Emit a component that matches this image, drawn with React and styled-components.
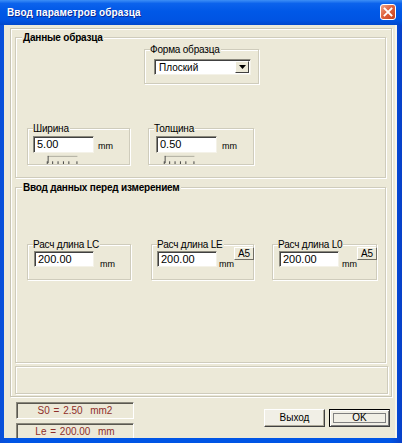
import React from 'react';
import styled, { createGlobalStyle } from 'styled-components';

const Global = createGlobalStyle`
  html, body { margin: 0; padding: 0; background: #fff; }
  body { font-family: "Liberation Sans", Arial, sans-serif; }
  * { box-sizing: border-box; }
`;

const Window = styled.div`
  width: 402px;
  height: 443px;
  display: flex;
  flex-direction: column;
  background: linear-gradient(to right, #0A4FD8, #0055E5 3%, #0055E5 97%, #0840C8);
  overflow: hidden;
`;

const TitleBar = styled.div`
  height: 25px;
  flex: none;
  display: flex;
  align-items: center;
  justify-content: space-between;
  padding: 0 6px 1px 7px;
  background: linear-gradient(to bottom, #3D8FF6 0%, #0C63EC 14%, #0058E7 45%, #0054E3 80%, #0047CC 100%);
`;

const Title = styled.span`
  color: #fff;
  font-weight: bold;
  font-size: 10px;
  text-shadow: 1px 1px 0 #0B2A94;
  letter-spacing: 0.1px;
`;

const CloseBtn = styled.div`
  width: 16px;
  height: 16px;
  border: 1px solid #fff;
  border-radius: 3px;
  background: linear-gradient(135deg, #F0A58A 0%, #E0643E 45%, #C8401C 100%);
  display: flex;
  align-items: center;
  justify-content: center;
`;

const Body = styled.div`
  flex: 1;
  margin: 0 5px 5px 4px;
  background: #ECE9D8;
  overflow: hidden;
  display: flex;
  flex-direction: column;
  padding: 3px 0 0 6px;
  border-right: 2px solid #F7F5EC;
`;

const Frame = styled.div`
  width: 382px;
  height: 369px;
  flex: none;
  border: 1px solid #C8C5B4;
  box-shadow: inset 1px 1px 0 #fff, 1px 1px 0 #fff;
  padding: 8px 0 0 4px;
  display: flex;
  flex-direction: column;
`;

const Group = styled.div`
  position: relative;
  width: 371px;
  height: ${p => p.$h}px;
  margin-top: ${p => p.$mt || 0}px;
  border: 1px solid #CFCCBC;
  box-shadow: inset 1px 1px 0 #fff, 1px 1px 0 #fff;
  display: flex;
  flex-direction: column;
  flex: none;
`;

const GroupLegend = styled.span`
  position: absolute;
  top: -7px;
  left: 6px;
  padding: 0 1px;
  background: #ECE9D8;
  font-size: 10px;
  font-weight: bold;
  color: #000;
  line-height: 13px;
  letter-spacing: -0.2px;
`;

const Row = styled.div`
  display: flex;
  gap: ${p => p.$gap || 0}px;
  margin-top: ${p => p.$mt || 0}px;
  margin-left: ${p => p.$ml || 0}px;
`;

const SubGroup = styled.div`
  position: relative;
  width: ${p => p.$w}px;
  height: ${p => p.$h}px;
  border: 1px solid #CFCCBC;
  box-shadow: inset 1px 1px 0 #fff, 1px 1px 0 #fff;
  padding: ${p => p.$pt}px 0 0 ${p => p.$pl}px;
  display: flex;
  flex-direction: column;
`;

const SubLegend = styled.span`
  position: absolute;
  top: -6px;
  left: 5px;
  padding: 0 1px 0 0;
  background: #ECE9D8;
  font-size: 10px;
  line-height: 11px;
  color: #000;
  letter-spacing: -0.2px;
`;

const FieldRow = styled.div`
  display: flex;
  align-items: flex-end;
`;

const Input = styled.div`
  width: ${p => p.$w}px;
  height: ${p => p.$h}px;
  flex: none;
  background: #fff;
  border-top: 1px solid #8A887C;
  border-left: 1px solid #8A887C;
  border-right: 1px solid #F4F2E8;
  border-bottom: 1px solid #F4F2E8;
  box-shadow: inset 1px 1px 0 #404040;
  padding: 1px 0 0 3px;
  font-size: 11px;
  line-height: 13px;
  color: #000;
`;

const Unit = styled.span`
  font-size: 9px;
  color: #000;
  margin-left: ${p => p.$ml}px;
  margin-bottom: ${p => p.$mb}px;
  line-height: 10px;
`;

const SmallBtn = styled.div`
  margin-left: auto;
  margin-right: -1px;
  align-self: flex-start;
  margin-top: -4px;
  width: 20px;
  height: 13px;
  background: #ECE9D8;
  border-top: 1px solid #fff;
  border-left: 1px solid #fff;
  border-right: 1px solid #716F64;
  border-bottom: 1px solid #716F64;
  font-size: 10px;
  line-height: 11px;
  text-align: center;
  color: #000;
`;

const Select = styled.div`
  width: 97px;
  height: 16px;
  background: #fff;
  border-top: 1px solid #8A887C;
  border-left: 1px solid #8A887C;
  border-right: 1px solid #F4F2E8;
  border-bottom: 1px solid #F4F2E8;
  box-shadow: inset 1px 1px 0 #404040;
  display: flex;
  align-items: center;
  justify-content: space-between;
  padding: 1px 1px 1px 4px;
  font-size: 10px;
  color: #000;
`;

const ArrowBtn = styled.div`
  width: 14px;
  height: 12px;
  background: #ECE9D8;
  border-top: 1px solid #fff;
  border-left: 1px solid #fff;
  border-right: 1px solid #404040;
  border-bottom: 1px solid #404040;
  display: flex;
  align-items: center;
  justify-content: center;
`;

const Track = styled.svg`
  margin: 2px 0 0 ${p => p.$ml}px;
  display: block;
`;

const Blank = styled.div`
  width: 373px;
  height: 28px;
  margin-top: 3px;
  border: 1px solid #CFCCBC;
  box-shadow: inset 1px 1px 0 #fff, 1px 1px 0 #fff;
  flex: none;
`;

const Bottom = styled.div`
  width: 382px;
  display: flex;
  justify-content: space-between;
  margin-top: 5px;
`;

const StatusCol = styled.div`
  margin-left: 6px;
  display: flex;
  flex-direction: column;
  gap: 4px;
`;

const Status = styled.div`
  width: 118px;
  height: 17px;
  border-top: 1px solid #8A887C;
  border-left: 1px solid #8A887C;
  border-right: 1px solid #fff;
  border-bottom: 1px solid #fff;
  box-shadow: inset 1px 1px 0 #5A5850;
  color: #8E2F2A;
  font-size: 10px;
  line-height: 15px;
  text-align: center;
  word-spacing: 1px;
`;

const Buttons = styled.div`
  display: flex;
  gap: 4px;
  margin-top: 7px;
  margin-right: 2px;
  align-self: flex-start;
`;

const Button = styled.div`
  width: 61px;
  height: 18px;
  background: #F1EFE6;
  border: 1px solid ${p => (p.$def ? '#000' : '#fff')};
  border-right-color: #404040;
  border-bottom-color: #404040;
  box-shadow: ${p =>
    p.$def
      ? 'inset 1px 1px 0 #fff, inset -1px -1px 0 #808080, inset 0 0 0 3px #F1EFE6, inset 0 0 0 4px #808080'
      : 'inset -1px -1px 0 #ACA899'};
  font-size: 10px;
  line-height: 16px;
  text-align: center;
  color: #000;
`;

function Trackbar({ ml }) {
  return (
    <Track $ml={ml} width="38" height="10" viewBox="0 0 38 10">
      <line x1="2" y1="1.5" x2="35" y2="1.5" stroke="#A8A698" strokeWidth="1" />
      <line x1="2.5" y1="1" x2="2.5" y2="9" stroke="#404040" strokeWidth="1" />
      {[1, 7, 13, 19, 25, 34].map(x => (
        <line key={x} x1={x + 0.5} y1="7" x2={x + 0.5} y2="10" stroke="#333" strokeWidth="1" />
      ))}
    </Track>
  );
}

export default function App() {
  return (
    <>
      <Global />
      <Window>
        <TitleBar>
          <Title>Ввод параметров образца</Title>
          <CloseBtn>
            <svg width="10" height="10" viewBox="0 0 10 10">
              <path d="M1.5 1.5 L8.5 8.5 M8.5 1.5 L1.5 8.5" stroke="#fff" strokeWidth="1.8" strokeLinecap="square" />
            </svg>
          </CloseBtn>
        </TitleBar>
        <Body>
          <Frame>
            <Group $h={141}>
              <GroupLegend>Данные образца</GroupLegend>
              <Row $mt={11} $ml={128}>
                <SubGroup $w={115} $h={35} $pt={9} $pl={9}>
                  <SubLegend>Форма образца</SubLegend>
                  <Select>
                    <span>Плоский</span>
                    <ArrowBtn>
                      <svg width="7" height="4" viewBox="0 0 7 4">
                        <path d="M0 0 H7 L3.5 4 Z" fill="#000" />
                      </svg>
                    </ArrowBtn>
                  </Select>
                </SubGroup>
              </Row>
              <Row $mt={44} $ml={11} $gap={18}>
                <SubGroup $w={103} $h={37} $pt={7} $pl={5}>
                  <SubLegend>Ширина</SubLegend>
                  <FieldRow>
                    <Input $w={61} $h={17}>5.00</Input>
                    <Unit $ml={4} $mb={2}>mm</Unit>
                  </FieldRow>
                  <Trackbar ml={11} />
                </SubGroup>
                <SubGroup $w={106} $h={37} $pt={7} $pl={7}>
                  <SubLegend>Толщина</SubLegend>
                  <FieldRow>
                    <Input $w={61} $h={17}>0.50</Input>
                    <Unit $ml={5} $mb={2}>mm</Unit>
                  </FieldRow>
                  <Trackbar ml={5} />
                </SubGroup>
              </Row>
            </Group>
            <Group $h={176} $mt={9}>
              <GroupLegend>Ввод данных перед измерением</GroupLegend>
              <Row $mt={56} $ml={11}>
                <SubGroup $w={104} $h={36} $pt={6} $pl={6}>
                  <SubLegend>Расч длина LC</SubLegend>
                  <FieldRow>
                    <Input $w={60} $h={16}>200.00</Input>
                    <Unit $ml={6} $mb={-2}>mm</Unit>
                  </FieldRow>
                </SubGroup>
                <Row $ml={20}>
                  <SubGroup $w={103} $h={36} $pt={6} $pl={5}>
                    <SubLegend>Расч длина LE</SubLegend>
                    <FieldRow>
                      <Input $w={60} $h={16}>200.00</Input>
                      <Unit $ml={2} $mb={-2}>mm</Unit>
                      <SmallBtn>A5</SmallBtn>
                    </FieldRow>
                  </SubGroup>
                </Row>
                <Row $ml={18}>
                  <SubGroup $w={105} $h={36} $pt={6} $pl={6}>
                    <SubLegend>Расч длина L0</SubLegend>
                    <FieldRow>
                      <Input $w={60} $h={16}>200.00</Input>
                      <Unit $ml={3} $mb={-2}>mm</Unit>
                      <SmallBtn>A5</SmallBtn>
                    </FieldRow>
                  </SubGroup>
                </Row>
              </Row>
            </Group>
            <Blank />
          </Frame>
          <Bottom>
            <StatusCol>
              <Status>S0 = 2.50 &nbsp;mm2</Status>
              <Status>Le = 200.00 &nbsp;mm</Status>
            </StatusCol>
            <Buttons>
              <Button>Выход</Button>
              <Button $def>OK</Button>
            </Buttons>
          </Bottom>
        </Body>
      </Window>
    </>
  );
}
